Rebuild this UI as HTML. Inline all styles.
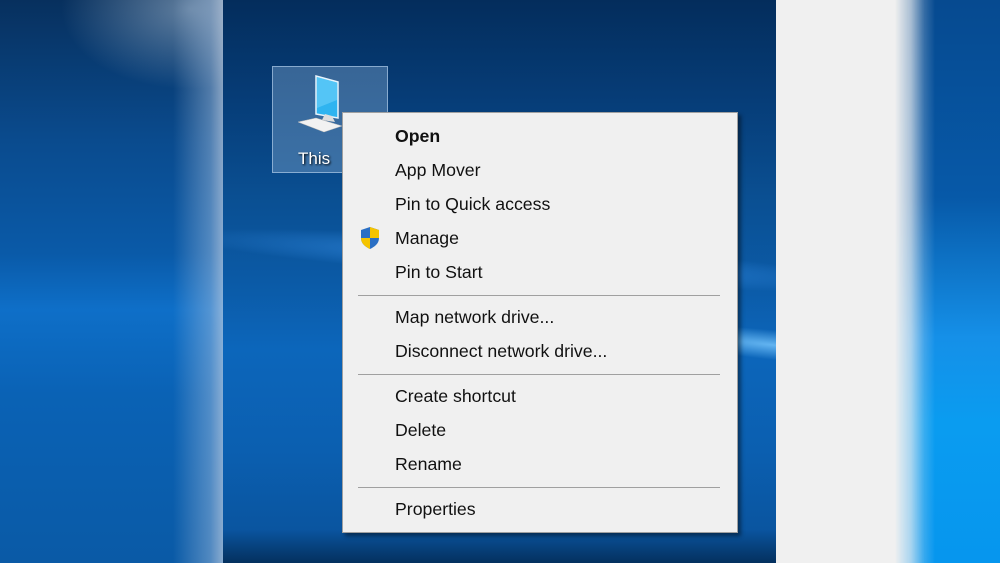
<!DOCTYPE html>
<html><head><style>
html,body{margin:0;padding:0;width:1000px;height:563px;overflow:hidden;}
body{position:relative;background:#0a4f98;font-family:"Liberation Sans",sans-serif;}
.left{position:absolute;left:0;top:0;width:223px;height:563px;
background:linear-gradient(180deg,#07305e 0%,#0a4b8e 25%,#0a5aa8 45%,#0e6fc8 55%,#0a62b5 70%,#0a5aa6 100%);}
.left:before{content:"";position:absolute;left:60px;top:0;width:163px;height:90px;
background:radial-gradient(ellipse at 80% 10%,rgba(170,190,210,.55) 0%,rgba(170,190,210,0) 70%);}
.left:after{content:"";position:absolute;right:0;top:0;width:50px;height:563px;
background:linear-gradient(90deg,rgba(200,215,230,0) 0%,rgba(170,195,225,.45) 75%,rgba(190,205,225,.7) 100%);}
.center{position:absolute;left:223px;top:0;width:553px;height:563px;overflow:hidden;
background:linear-gradient(180deg,#042d5c 0%,#063d78 18%,#0a4f92 35%,#0b5aa6 50%,#0c66bb 62%,#0b5fb0 80%,#0a55a0 94%,#04305e 100%);}
.streak{position:absolute;left:-50px;top:240px;width:700px;height:40px;transform:rotate(4deg);
background:radial-gradient(ellipse at center,rgba(60,150,240,.7) 0%,rgba(60,150,240,0) 70%);}
.streak2{position:absolute;left:400px;top:330px;width:300px;height:30px;transform:rotate(6deg);
background:radial-gradient(ellipse at center,rgba(120,200,255,.8) 0%,rgba(60,150,240,0) 70%);}
.gray{position:absolute;left:776px;top:0;width:224px;height:563px;background:#f0f0f0;}
.gray2{position:absolute;left:895px;top:0;width:105px;height:563px;
background:linear-gradient(180deg,#064a90 0%,#0759a8 35%,#1590e8 60%,#0a9cf0 75%,#0696ee 100%);
-webkit-mask-image:linear-gradient(90deg,transparent 0%,rgba(0,0,0,.3) 15%,rgba(0,0,0,.8) 28%,#000 38%,#000 100%);
mask-image:linear-gradient(90deg,transparent 0%,rgba(0,0,0,.3) 15%,rgba(0,0,0,.8) 28%,#000 38%,#000 100%);}
.icon{position:absolute;left:272px;top:66px;width:114px;height:105px;background:rgba(120,160,200,.45);border:1px solid rgba(170,200,230,.7);}
.menu{position:absolute;left:342px;top:112px;width:394px;height:419px;background:#f0f0f0;border:1px solid #a0a0a0;box-shadow:3px 3px 4px rgba(0,0,0,.45);}
.it{position:absolute;left:52px;font-size:17.7px;color:#111;line-height:20px;}
.sep{position:absolute;left:15px;width:362px;height:1px;background:#a0a0a0;}
.lbl{position:absolute;left:298px;top:149px;font-size:17px;color:#fff;text-shadow:1px 1px 2px #000;}
</style></head><body>
<div class="left"></div>
<div class="center"><div class="streak"></div><div class="streak2"></div></div>
<div class="gray"></div><div class="gray2"></div>
<div class="icon"></div>
<svg style="position:absolute;left:290px;top:70px" width="80" height="70" viewBox="0 0 80 70">
<polygon points="26,6 48,12 48,48 26,44" fill="#2fb4f0" stroke="#e8f4fc" stroke-width="1.5"/>
<polygon points="27,7 47,12.5 47,30 27,38" fill="#6ed0fa" opacity=".6"/>
<polygon points="35,44 42,46 45,52 32,50" fill="#ddd"/>
<polygon points="8,52 26,48 52,56 34,62" fill="#f2f2f2" stroke="#bbb" stroke-width=".5"/>
</svg>
<div class="lbl">This</div>
<div class="menu">
<div class="it" style="top:13px;font-weight:bold">Open</div>
<div class="it" style="top:47px">App Mover</div>
<div class="it" style="top:81px">Pin to Quick access</div>
<svg style="position:absolute;left:16px;top:113px" width="22" height="24" viewBox="0 0 22 24">
<path d="M11 1 L20 4 L20 12 C20 18 15 21 11 23 C7 21 2 18 2 12 L2 4 Z" fill="#2a6fc4"/>
<path d="M11 1 L20 4 L20 12 L11 12 Z" fill="#f5c400"/>
<path d="M2 12 L11 12 L11 23 C7 21 2 18 2 12 Z" fill="#f5c400"/>
</svg>
<div class="it" style="top:115px">Manage</div>
<div class="it" style="top:149px">Pin to Start</div>
<div class="sep" style="top:182px"></div>
<div class="it" style="top:194px">Map network drive...</div>
<div class="it" style="top:228px">Disconnect network drive...</div>
<div class="sep" style="top:261px"></div>
<div class="it" style="top:273px">Create shortcut</div>
<div class="it" style="top:307px">Delete</div>
<div class="it" style="top:341px">Rename</div>
<div class="sep" style="top:374px"></div>
<div class="it" style="top:386px">Properties</div>
</div>
</body></html>
